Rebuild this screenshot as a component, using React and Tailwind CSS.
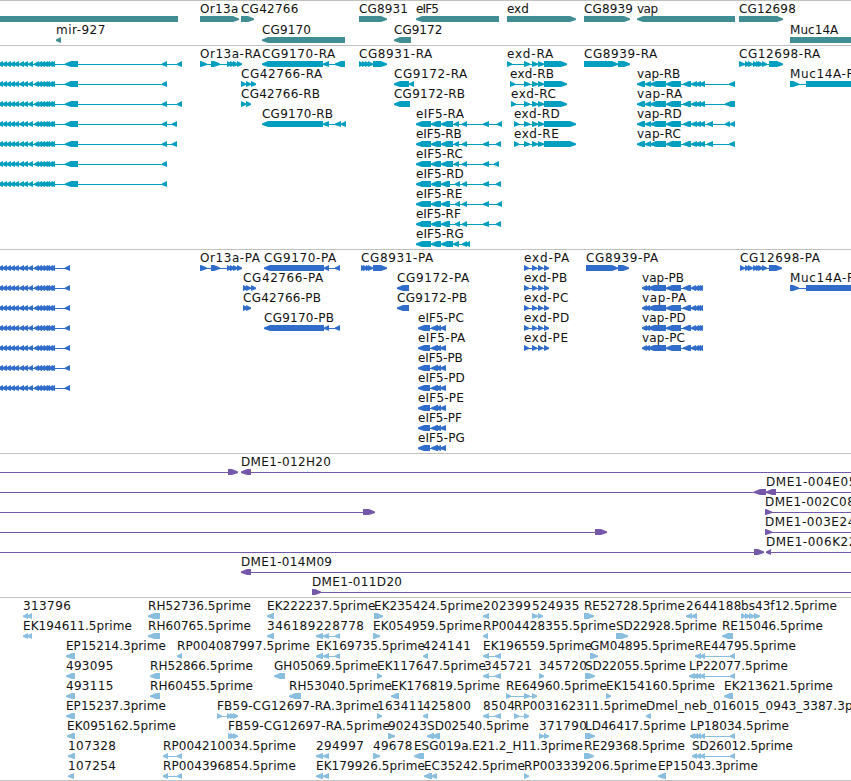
const WIDTH = 851;
const ROW = 20;

// A feature is [row, label, x, labelEnd, direction, exons]
const L = "left";
const R = "right";

const genes = [
    [0, "", 0, 0, null, [[-2, 178]]],
    [0, "Or13a", 200, 238, R, [[200, 239]]],
    [0, "CG42766", 241, 298, R, [[241, 254]]],
    [0, "CG8931", 359, 407.7, R, [[359, 387]]],
    [0, "eIF5", 416, 438.5, L, [[416, 499]]],
    [0, "exd", 507, 528.5, R, [[507, 576]]],
    [0, "CG8939", 584, 632.5, R, [[584, 630]]],
    [0, "vap", 637, 657.7, L, [[637, 735]]],
    [0, "CG12698", 739, 795.5, R, [[739, 783]]],
    [1, "mir-927", 56, 105, L, [[56, 61]]],
    [1, "CG9170", 262, 310.5, L, [[262, 345]]],
    [1, "CG9172", 394, 442, L, [[394, 411]]],
    [1, "Muc14A", 790, 838, null, [[790, 853]]],
];

const denseExons = [
    [-2, 3], [2, 7], [6, 11], [10, 15], [14, 19], [19, 24], [23, 28], [28, 33],
    [34, 39], [37, 42], [40, 45], [43, 48], [45, 50], [48, 53], [50, 55],
];
const longTail = [...denseExons, [65, 78], [162, 167]];
const or13a = [[200, 207], [211, 220], [227, 232], [230, 235], [233, 238], [237, 242]];
const eif5Long = [[416, 431], [431, 441], [441, 453], [454, 459], [462, 467], [483, 489]];
const eif5Short = [[416, 431], [431, 441], [441, 450], [455, 460], [462, 467], [483, 489]];
const exdInner = [[524, 530], [532, 538], [538, 544]];
const cg12698 = [[745, 750], [748, 753], [753, 758], [756, 761], [758, 763], [762, 767]];
const vapInner = [[637, 645], [645, 651], [650, 666], [666, 681], [683, 691], [691, 697], [695, 701], [699, 705]];

const transcripts = [
    [0, "", 0, 0, L, [...longTail, [177, 182]]],
    [1, "", 0, 0, L, longTail],
    [2, "", 0, 0, L, [...longTail, [177, 182]]],
    [3, "", 0, 0, L, [...longTail, [172, 177]]],
    [4, "", 0, 0, L, [...longTail, [172, 177]]],
    [5, "", 0, 0, L, longTail],
    [6, "", 0, 0, L, longTail],
    [0, "Or13a-RA", 200, 260.7, R, or13a],
    [0, "CG9170-RA", 262, 335, L, [[262, 323], [323, 329], [335, 345]]],
    [1, "CG42766-RA", 241, 322, R, [[241, 246], [246, 251], [251, 256]]],
    [2, "CG42766-RB", 241, 319.7, R, [[241, 246], [246, 251]]],
    [3, "CG9170-RB", 262, 332.7, L, [[262, 323], [323, 329], [335, 341], [341, 346]]],
    [0, "CG8931-RA", 359, 432, R, [[359, 364], [362, 367], [365, 370], [368, 373], [373, 387]]],
    [1, "CG9172-RA", 394, 467, L, [[394, 409], [409, 414]]],
    [2, "CG9172-RB", 394, 464.7, L, [[394, 410]]],
    [3, "eIF5-RA", 416, 463.7, L, [...eif5Long, [497, 502]]],
    [4, "eIF5-RB", 416, 461.5, L, [...eif5Long, [496, 501]]],
    [5, "eIF5-RC", 416, 462.5, L, [...eif5Long, [494, 499]]],
    [6, "eIF5-RD", 416, 463.5, L, [...eif5Short, [496, 501]]],
    [7, "eIF5-RE", 416, 462, L, [...eif5Short, [497, 502]]],
    [8, "eIF5-RF", 416, 460.5, L, [...eif5Short, [496, 501]]],
    [9, "eIF5-RG", 416, 463.5, L, [[416, 431], [431, 441], [441, 453], [453, 459], [462, 467], [465, 470]]],
    [0, "exd-RA", 507, 553, R, [[507, 512], ...exdInner, [544, 567]]],
    [1, "exd-RB", 510, 553.7, R, [[510, 515], ...exdInner, [544, 567]]],
    [2, "exd-RC", 511, 555.5, R, [[511, 516], ...exdInner, [544, 567]]],
    [3, "exd-RD", 514, 559.5, R, [[514, 519], ...exdInner, [544, 576]]],
    [4, "exd-RE", 514, 558.5, R, [[514, 519], ...exdInner, [544, 576]]],
    [0, "CG8939-RA", 584, 657, R, [[584, 618], [618, 630]]],
    [1, "vap-RB", 637, 680, L, [...vapInner, [729, 735]]],
    [2, "vap-RA", 637, 682, L, [...vapInner, [725, 735]]],
    [3, "vap-RD", 637, 681.5, L, [...vapInner, [707, 713], [725, 730], [730, 735]]],
    [4, "vap-RC", 637, 680.5, L, [...vapInner, [707, 713], [729, 735]]],
    [0, "CG12698-RA", 739, 820, R, [[739, 745], ...cg12698, [769, 783]]],
    [1, "Muc14A-RA", 790, 863, R, [[790, 799], [806, 870]]],
];

const proteinTail = [...denseExons, [65, 70]];
const eif5Protein = [[418, 430], [431, 438], [435, 441], [440, 446]];
const exdProtein = [[524, 529], [532, 537], [538, 543], [544, 549]];
const vapProtein = [
    [642, 647], [645, 650], [648, 666], [666, 681],
    [683, 691], [691, 696], [694, 699], [696, 701], [698, 703],
];

const proteins = [
    [0, "", 0, 0, L, proteinTail],
    [1, "", 0, 0, L, proteinTail],
    [2, "", 0, 0, L, proteinTail],
    [3, "", 0, 0, L, proteinTail],
    [4, "", 0, 0, L, proteinTail],
    [5, "", 0, 0, L, proteinTail],
    [6, "", 0, 0, L, proteinTail],
    [0, "Or13a-PA", 200, 259.7, R, or13a],
    [0, "CG9170-PA", 264, 336, L, [[264, 324], [324, 329], [335, 340]]],
    [1, "CG42766-PA", 243, 323, R, [[243, 248], [246, 251], [251, 256]]],
    [2, "CG42766-PB", 243, 320.7, R, [[243, 248], [246, 251]]],
    [3, "CG9170-PB", 264, 333.7, L, [[264, 324], [324, 329], [335, 340]]],
    [0, "CG8931-PA", 361, 433, R, [[361, 366], [363, 368], [366, 371], [368, 373], [373, 387]]],
    [1, "CG9172-PA", 397, 469, L, [[397, 409]]],
    [2, "CG9172-PB", 397, 467, L, [[397, 409]]],
    [3, "eIF5-PC", 418, 463.5, L, eif5Protein],
    [4, "eIF5-PA", 418, 465, L, eif5Protein],
    [5, "eIF5-PB", 418, 462.5, L, eif5Protein],
    [6, "eIF5-PD", 418, 464.5, L, eif5Protein],
    [7, "eIF5-PE", 418, 463.5, L, eif5Protein],
    [8, "eIF5-PF", 418, 461.7, L, eif5Protein],
    [9, "eIF5-PG", 418, 464.5, L, eif5Protein],
    [0, "exd-PA", 524, 569, R, exdProtein],
    [1, "exd-PB", 524, 567, R, exdProtein],
    [2, "exd-PC", 524, 568, R, exdProtein],
    [3, "exd-PD", 524, 569, R, exdProtein],
    [4, "exd-PE", 524, 567.7, R, exdProtein],
    [0, "CG8939-PA", 586, 658, R, [[586, 618], [618, 629]]],
    [1, "vap-PB", 642, 683.7, L, vapProtein],
    [2, "vap-PA", 642, 686, L, vapProtein],
    [3, "vap-PD", 642, 685.5, L, vapProtein],
    [4, "vap-PC", 642, 684.7, L, vapProtein],
    [0, "CG12698-PA", 740, 819.7, R, [[740, 745], ...cg12698, [769, 782]]],
    [1, "Muc14A-PA", 790, 862, R, [[790, 799], [806, 870]]],
];

const bacs = [
    [0, "", 0, 0, R, [[-10, -5], [228, 238]]],
    [0, "DME1-012H20", 241, 330.7, L, [[241, 251], [900, 910]]],
    [1, "", 0, 0, L, [[-10, -5], [754, 766]]],
    [1, "DME1-004E05", 766, 856, L, [[766, 776], [900, 910]]],
    [2, "", 0, 0, R, [[-10, -5], [363, 375]]],
    [2, "DME1-002C08", 765, 854.5, R, [[765, 772], [900, 910]]],
    [3, "", 0, 0, R, [[-10, -5], [595, 607]]],
    [3, "DME1-003E24", 765, 855, R, [[765, 772], [900, 910]]],
    [4, "", 0, 0, R, [[-10, -5], [754, 764]]],
    [4, "DME1-006K22", 766, 856, L, [[766, 771], [900, 910]]],
    [5, "DME1-014M09", 241, 331.7, L, [[241, 251], [900, 910]]],
    [6, "DME1-011D20", 312, 401.7, R, [[312, 321], [900, 910]]],
];

const ests = [
    [0, "313796", 23, 70.5, L, [[23, 28], [27, 32]]],
    [0, "RH52736.5prime", 148, 250.5, L, [[148, 160]]],
    [0, "EK222237.5prime", 267, 375, L, [[267, 274]]],
    [0, "EK235424.5prime", 374, 482.5, R, [[374, 383]]],
    [0, "202399", 483, 530.5, L, [[483, 489]]],
    [0, "524935", 532, 579, R, [[532, 538], [538, 543]]],
    [0, "RE52728.5prime", 584, 684.5, R, [[584, 594]]],
    [0, "2644188", 686, 741, L, [[686, 692], [691, 697]]],
    [0, "bs43f12.5prime", 741, 836.5, R, [[741, 746], [745, 750], [749, 755], [754, 760]]],

    [1, "EK194611.5prime", 23, 131.5, L, [[23, 28], [27, 32]]],
    [1, "RH60765.5prime", 148, 250.5, L, [[148, 160]]],
    [1, "346189", 267, 315, L, [[267, 274]]],
    [1, "228778", 316, 363.7, L, [[316, 323], [323, 329], [335, 340]]],
    [1, "EK054959.5prime", 373, 481.5, R, [[373, 380]]],
    [1, "RP004428355.5prime", 483, 615.5, L, [[483, 488]]],
    [1, "SD22928.5prime", 616, 716.5, R, [[616, 628]]],
    [1, "RE15046.5prime", 722, 822.5, L, [[722, 733]]],

    [2, "EP15214.3prime", 66, 165.5, L, [[66, 75]]],
    [2, "RP004087997.5prime", 177, 309.5, L, [[177, 182]]],
    [2, "EK169735.5prime", 316, 424.5, L, [[316, 323], [323, 329], [335, 340]]],
    [2, "424141", 423, 470.5, L, [[423, 428]]],
    [2, "EK196559.5prime", 483, 591.5, L, [[483, 489], [495, 501]]],
    [2, "GM04895.5prime", 590, 694.5, R, [[590, 598]]],
    [2, "RE44795.5prime", 695, 795.5, L, [[695, 701], [700, 705], [730, 735]]],

    [3, "493095", 66, 113, L, [[66, 75]]],
    [3, "RH52866.5prime", 150, 252.5, L, [[150, 160]]],
    [3, "GH05069.5prime", 274, 377.5, L, [[274, 285]]],
    [3, "EK117647.5prime", 377, 485.5, R, [[377, 382]]],
    [3, "345721", 484, 531.5, L, [[483, 489], [495, 501]]],
    [3, "345720", 539, 586.5, R, [[539, 544]]],
    [3, "SD22055.5prime", 585, 685.5, R, [[585, 595]]],
    [3, "LP22077.5prime", 689, 787.5, L, [[689, 695], [693, 698], [696, 701], [700, 705], [730, 735]]],

    [4, "493115", 66, 113, L, [[66, 75]]],
    [4, "RH60455.5prime", 150, 252.5, L, [[150, 160]]],
    [4, "RH53040.5prime", 289, 391.5, L, [[289, 301]]],
    [4, "EK176819.5prime", 391, 499.5, L, [[391, 399]]],
    [4, "RE64960.5prime", 506, 606.5, R, [[506, 511], [524, 530], [532, 537]]],
    [4, "EK154160.5prime", 606, 714.5, R, [[606, 611]]],
    [4, "EK213621.5prime", 724, 832.5, L, [[724, 733]]],

    [5, "EP15237.3prime", 66, 165.5, L, [[66, 75]]],
    [5, "FB59-CG12697-RA.3prime", 217, 378.5, R, [[217, 222], [227, 232], [230, 235], [233, 238]]],
    [5, "163411", 377, 424, R, [[377, 382]]],
    [5, "425800", 423, 470.5, L, [[423, 428]]],
    [5, "8504", 483, 514.5, L, [[483, 489], [495, 501]]],
    [5, "RP003162311.5prime", 514, 646.5, R, [[514, 519], [524, 529]]],
    [5, "Dmel_neb_016015_0943_3387.3prime", 646, 880, L, [[646, 651]]],

    [6, "EK095162.5prime", 67, 175.5, L, [[67, 75]]],
    [6, "FB59-CG12697-RA.5prime", 228, 389.5, R, [[228, 233], [230, 235], [233, 238]]],
    [6, "90243", 388, 426.5, R, [[388, 395]]],
    [6, "SD02540.5prime", 427, 528.5, L, [[427, 434], [432, 440]]],
    [6, "371790", 539, 586.5, R, [[539, 544], [544, 549]]],
    [6, "LD46417.5prime", 585, 685.5, R, [[585, 595]]],
    [6, "LP18034.5prime", 690, 788.5, L, [[690, 695], [693, 698], [696, 701], [700, 705], [730, 735]]],

    [7, "107328", 68, 115.7, L, [[68, 75]]],
    [7, "RP004210034.5prime", 163, 295.5, L, [[163, 168], [177, 182]]],
    [7, "294997", 316, 363.5, L, [[316, 323], [323, 329]]],
    [7, "49678", 373, 412, R, [[373, 380]]],
    [7, "ESG019a.E21.2_H11.3prime", 414, 582.5, L, [[414, 424]]],
    [7, "RE29368.5prime", 584, 684.5, R, [[584, 594]]],
    [7, "SD26012.5prime", 692, 792.5, L, [[692, 697], [696, 701], [700, 705], [730, 735]]],

    [8, "107254", 68, 115.7, L, [[68, 74]]],
    [8, "RP004396854.5prime", 163, 295.5, L, [[163, 168], [177, 182]]],
    [8, "EK179926.5prime", 316, 424.5, L, [[316, 323], [323, 329]]],
    [8, "EC35242.5prime", 424, 524.5, L, [[424, 432], [431, 437]]],
    [8, "RP003339206.5prime", 524, 656.5, R, [[524, 529]]],
    [8, "EP15043.3prime", 658, 757.5, L, [[658, 666]]],
];

// Six pixel high bar, tapered on the side the strand points to
function exonPoints(start, end, dir, y) {
    const head = Math.min(end - start, 6);
    if (dir === L) {
        return `${end},${y} ${start + head},${y} ${start},${y + 2.4} ${start},${y + 4} ${start + head},${y + 6} ${end},${y + 6}`;
    }
    if (dir === R) {
        return `${start},${y} ${end - head},${y} ${end},${y + 2.4} ${end},${y + 4} ${end - head},${y + 6} ${start},${y + 6}`;
    }
    return `${start},${y} ${end},${y} ${end},${y + 6} ${start},${y + 6}`;
}

function Feature({ feature, pitch }) {
    const [row, label, x, labelEnd, dir, exons] = feature;
    const top = row * pitch;
    const first = exons[0][0];
    const last = exons[exons.length - 1][1];

    return (
        <g>
            {exons.length > 1 && (
                <rect x={first} y={top + 18} width={last - first} height="1" shapeRendering="crispEdges" />
            )}
            {exons.map(([start, end], i) => (
                <polygon key={i} points={exonPoints(start, end, dir, top + 15)} />
            ))}
            {label && (
                <text
                    x={x}
                    y={top + 12}
                    textLength={labelEnd - x + 0.3}
                    className="fill-[#111111] font-['DejaVu_Sans',sans-serif] text-[12px]"
                >
                    {label}
                </text>
            )}
        </g>
    );
}

function Track({ features, className, pitch = ROW }) {
    return (
        <section className={`w-full overflow-hidden border-t border-[#c0c0c0] ${className}`}>
            <svg width={WIDTH} height="100%" className="block">
                {features.map((feature, i) => (
                    <Feature key={i} feature={feature} pitch={pitch} />
                ))}
            </svg>
        </section>
    );
}

export default function App() {
    return (
        <main className="flex h-[781px] w-[851px] flex-col overflow-hidden border-b border-[#c0c0c0] bg-white">
            <Track features={genes} pitch={21} className="h-[45px] shrink-0 fill-[#408d94]" />
            <Track features={transcripts} className="h-[204px] shrink-0 fill-[#009ebf]" />
            <Track features={proteins} className="h-[204px] shrink-0 fill-[#306dca]" />
            <Track features={bacs} className="h-[144px] shrink-0 fill-[#7559a8]" />
            <Track features={ests} className="h-[183px] shrink-0 fill-[#89bedf]" />
        </main>
    );
}
